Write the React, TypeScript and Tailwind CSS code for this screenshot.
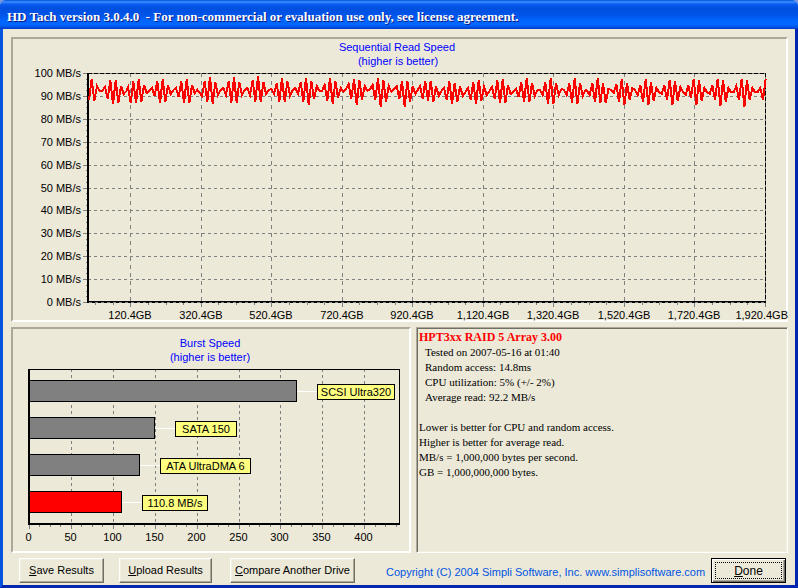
import type { ReactNode } from "react";

// [start x, readings...] for each burst of the read speed trace
const traceStep = 2.67;
const trace = [
  [89, 100, 79, 101, 86, 91, 91],
  [105, 87, 99, 80, 104, 80, 103, 86, 94, 91],
  [128, 87, 103, 81, 103, 79, 102, 85, 93, 91],
  [152, 88, 96, 81, 103, 79, 102, 85, 94, 90],
  [176, 88, 97, 81, 103, 79, 103, 85, 93, 90],
  [202, 96, 81, 102, 77, 104, 82, 95, 90, 88],
  [226, 95, 81, 103, 77, 103, 82, 95, 90, 88],
  [250, 95, 80, 102, 76, 102, 82, 94, 90, 89],
  [274, 94, 83, 102, 78, 102, 81, 96, 90, 88],
  [298, 94, 82, 102, 78, 105, 81, 99, 86, 91],
  [322, 91, 85, 101, 78, 104, 81, 98, 88, 92],
  [346, 89, 84, 99, 79, 105, 80, 100, 86, 91],
  [370, 89, 85, 100, 78, 107, 80, 102, 86, 92],
  [394, 89, 86, 99, 81, 107, 81, 102, 86, 94],
  [420, 86, 99, 81, 101, 81, 102, 86, 96, 91],
  [444, 88, 100, 81, 104, 83, 102, 86, 96, 92],
  [468, 88, 100, 82, 104, 80, 101, 87, 95, 91],
  [492, 87, 99, 80, 103, 79, 103, 85, 94, 92],
  [516, 89, 97, 82, 102, 78, 102, 83, 96, 90],
  [540, 90, 95, 82, 104, 78, 104, 83, 95, 89],
  [564, 90, 95, 83, 103, 78, 104, 83, 96, 90],
  [587, 91, 95, 83, 102, 78, 103, 83, 103, 89],
  [611, 90, 93, 84, 102, 79, 105, 83, 100, 88],
  [635, 90, 95, 85, 102, 79, 105, 82, 101, 88],
  [659, 92, 94, 85, 100, 80, 105, 81, 101, 87],
  [683, 92, 95, 85, 98, 79, 105, 80, 101, 88],
  [707, 92, 94, 85, 100, 79, 106, 80, 102, 88],
  [731, 92, 92, 86, 100, 79, 107, 80, 100, 88],
  [755, 92, 92, 88, 100, 79],
];

const tracePoints = trace
  .flatMap(([x, ...ys]) => ys.map((y, i) => `${(x + i * traceStep).toFixed(1)},${y}`))
  .join(" ");

const speeds = [100, 90, 80, 70, 60, 50, 40, 30, 20, 10, 0];
const positions = [
  "120.4GB",
  "320.4GB",
  "520.4GB",
  "720.4GB",
  "920.4GB",
  "1,120.4GB",
  "1,320.4GB",
  "1,520.4GB",
  "1,720.4GB",
  "1,920.4GB",
];

const bursts = [
  { label: "SCSI Ultra320", end: 297, color: "#808080", tag: 317, tagWidth: 78 },
  { label: "SATA 150", end: 155, color: "#808080", tag: 175, tagWidth: 62 },
  { label: "ATA UltraDMA 6", end: 140, color: "#808080", tag: 160, tagWidth: 91 },
  { label: "110.8 MB/s", end: 122, color: "#ff0000", tag: 142, tagWidth: 66 },
];

const speedY = (v: number) => Math.round(302 - v * 2.29) + 0.5;
const posX = (i: number) => Math.round(130 + i * 70.5) + 0.5;
const burstX = (v: number) => Math.round(29 + v * 0.838) + 0.5;

const chartText = "font-['Liberation_Sans',Arial,sans-serif] text-[11px]";

function ReadSpeedChart() {
  return (
    <svg
      viewBox="13 39 775 283"
      className={`-mb-0.5 block w-[calc(100%+2px)] max-w-none overflow-visible ${chartText}`}
      role="img"
      aria-label="Sequential Read Speed"
    >
      <g fill="#0000ff" textAnchor="middle">
        <text x="397" y="51">Sequential Read Speed</text>
        <text x="398" y="65">(higher is better)</text>
      </g>
      <g shapeRendering="crispEdges" fill="none" stroke="#808080">
        {speeds.map((v) => (
          <g key={v}>
            <path d={`M83 ${speedY(v)}H88`} />
            <path d={`M88 ${speedY(v)}H765`} strokeDasharray="3 3" />
          </g>
        ))}
        {positions.map((p, i) => (
          <g key={p}>
            <path d={`M${posX(i)} 73V302`} strokeDasharray="4 4" />
            <path d={`M${posX(i)} 302V307`} />
          </g>
        ))}
        {Array.from({ length: 38 }, (_, i) => (
          <path key={i} d={`M${Math.round(95 + i * 17.63) + 0.5} 302V305`} />
        ))}
        {Array.from({ length: 40 }, (_, i) => (
          <path key={i} d={`M86 ${Math.round(73 + i * 5.725) + 0.5}H88`} />
        ))}
        <path d="M88 73.5H766" />
        <path d="M88 73.5H766" stroke="#000" strokeDasharray="4 2" />
        <path d="M765.5 73V303" />
        <path d="M765.5 73V303" stroke="#000" strokeDasharray="4 2" />
        <path d="M88 73V302H765" stroke="#000" strokeWidth="2" />
        <path d="M89 302.5H765" strokeDasharray="3 3" />
        <path d="M89 302.5H765" stroke="#000" strokeDasharray="3 3" strokeDashoffset="3" />
        <polyline points={tracePoints} stroke="#ff0000" strokeWidth="2" />
      </g>
      <g textAnchor="end">
        {speeds.map((v) => (
          <text key={v} x="81" y={speedY(v) + 3.5}>{v} MB/s</text>
        ))}
      </g>
      <g textAnchor="middle">
        {positions.slice(0, -1).map((p, i) => (
          <text key={p} x={posX(i) - 0.5} y="319">{p}</text>
        ))}
      </g>
      {/* the last label would run past the frame if it were centred */}
      <text x="788" y="319" textAnchor="end">{positions[positions.length - 1]}</text>
    </svg>
  );
}

function BurstSpeedChart() {
  const ticks = [0, 50, 100, 150, 200, 250, 300, 350, 400];
  return (
    <svg
      viewBox="13 329 396 222"
      className={`block w-full ${chartText}`}
      role="img"
      aria-label="Burst Speed"
    >
      <g fill="#0000ff" textAnchor="middle">
        <text x="210" y="347">Burst Speed</text>
        <text x="210" y="361">(higher is better)</text>
      </g>
      <g shapeRendering="crispEdges" fill="none" stroke="#808080">
        {ticks.map((v) => (
          <g key={v}>
            {v > 0 && <path d={`M${burstX(v)} 369V524`} strokeDasharray="3 3" />}
            <path d={`M${burstX(v)} 524V529`} />
          </g>
        ))}
        {Array.from({ length: 36 }, (_, i) => (
          <path key={i} d={`M${Math.round(29 + i * 10.475) + 0.5} 524V527`} />
        ))}
        <path d="M29 369.5H399.5V524" stroke="#000" />
        {bursts.map((b, i) => (
          <g key={b.label}>
            <rect x="29.5" y={380.5 + i * 37} width={b.end - 30} height="21" fill={b.color} stroke="#000" />
            <path d={`M${b.end} ${391.5 + i * 37}H${b.tag}`} stroke="#fff" />
            <rect x={b.tag + 0.5} y={384.5 + i * 37} width={b.tagWidth - 1} height="15" fill="#ffff80" stroke="#000" />
          </g>
        ))}
        <path d="M29 369V524H400" stroke="#000" strokeWidth="2" />
      </g>
      <g textAnchor="middle">
        {bursts.map((b, i) => (
          <text key={b.label} x={b.tag + b.tagWidth / 2} y={396 + i * 37}>{b.label}</text>
        ))}
        {ticks.map((v) => (
          <text key={v} x={burstX(v) - 1} y="541">{v}</text>
        ))}
      </g>
    </svg>
  );
}

function Button({ children, className }: { children: ReactNode; className: string }) {
  return (
    <button
      type="button"
      className={`h-[25px] border border-t-white border-r-[#716f64] border-b-[#716f64] border-l-white text-[11px] shadow-[inset_-1px_-1px_#aca899,inset_1px_1px_#f1efe2] ${className}`}
    >
      {children}
    </button>
  );
}

export default function App() {
  return (
    <div className="flex flex-col bg-[#7a96df] font-['Liberation_Sans',Arial,sans-serif] text-black">
      <header className="flex h-[29px] items-center rounded-t-md bg-[linear-gradient(to_bottom,#0050d8_0px,#3c90ff_2px,#0a5cf0_4px,#0050e0_8px,#0054e8_15px,#0066ff_21px,#0066ff_25px,#0048d8_28px,#003cc0_29px)] px-[7px] pt-1">
        <h1 className="font-['Liberation_Serif','Times_New_Roman',serif] text-[13px] leading-4 font-bold whitespace-pre text-white [text-shadow:1px_1px_#0a1883]">
          {"HD Tach version 3.0.4.0  - For non-commercial or evaluation use only, see license agreement."}
        </h1>
      </header>

      <main className="border-x-[3px] border-b-[3px] border-t-0 border-l-[#0855dd] border-r-[#0026b0] border-b-[#0026b0] bg-[#ece9d8] pt-2 pr-[7px] pb-0.5 pl-2">
        <section className="border-2 border-t-[#aca899] border-r-white border-b-white border-l-[#aca899]">
          <ReadSpeedChart />
        </section>

        <div className="mt-[5px] grid grid-cols-[400fr_372fr] gap-[5px]">
          <section className="border-2 border-t-[#aca899] border-r-white border-b-white border-l-[#aca899]">
            <BurstSpeedChart />
          </section>

          <section className="border border-t-[#aca899] border-r-white border-b-white border-l-[#aca899] px-0.5 pt-0.5 font-['Liberation_Serif','Times_New_Roman',serif] text-[11px] leading-[15px] shadow-[inset_1px_1px_#716f64,inset_-1px_-1px_#f1efe2]">
            <h2 className="text-xs leading-[15px] font-bold text-[#ff0000]">HPT3xx RAID 5 Array 3.00</h2>
            <div className="pl-1.5">
              <p>Tested on 2007-05-16 at 01:40</p>
              <p>Random access: 14.8ms</p>
              <p>CPU utilization: 5% (+/- 2%)</p>
              <p>Average read: 92.2 MB/s</p>
            </div>
            <div className="mt-[15px]">
              <p>Lower is better for CPU and random access.</p>
              <p>Higher is better for average read.</p>
              <p>MB/s = 1,000,000 bytes per second.</p>
              <p>GB = 1,000,000,000 bytes.</p>
            </div>
          </section>
        </div>

        <footer className="mt-[5px] flex items-center pr-0.5 pl-2">
          <Button className="w-[85px]"><u>S</u>ave Results</Button>
          <Button className="ml-[15px] w-[93px]"><u>U</u>pload Results</Button>
          <Button className="ml-[18px] w-[125px]"><u>C</u>ompare Another Drive</Button>
          <p className="ml-[31px] pt-1 text-[11px] whitespace-nowrap text-[#0054e3]">
            Copyright (C) 2004 Simpli Software, Inc. <a href="#">www.simplisoftware.com</a>
          </p>
          <button
            type="button"
            className="ml-auto h-[25px] w-[75px] border border-black p-[3px] text-xs shadow-[inset_1px_1px_#fff,inset_-1px_-1px_#716f64,inset_-2px_-2px_#aca899]"
          >
            <span className="flex h-full items-center justify-center border border-dotted border-black">
              <span><u>D</u>one</span>
            </span>
          </button>
        </footer>
      </main>
    </div>
  );
}
